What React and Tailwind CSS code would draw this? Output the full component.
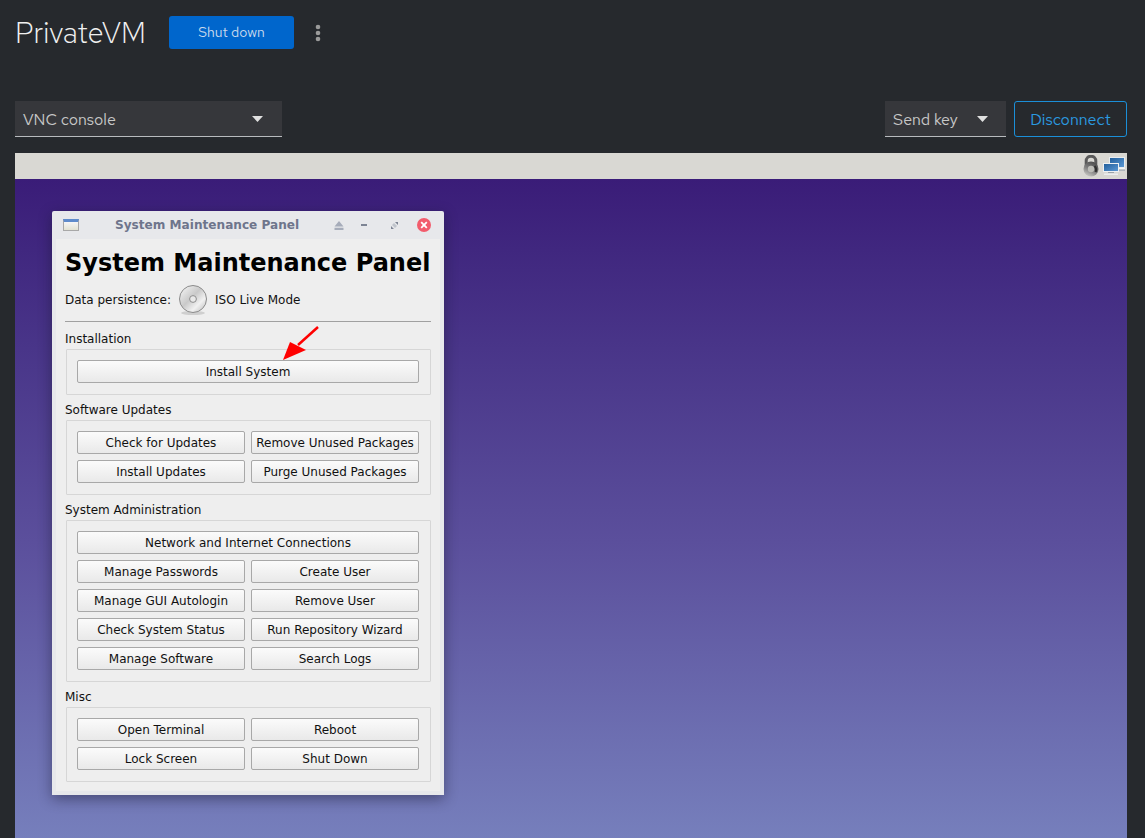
const ui = "font-['Red_Hat_Text','Open_Sans',sans-serif]";

function Caret() {
  return (
    <svg width="11" height="6" viewBox="0 0 11 6" className="shrink-0 mt-px">
      <path d="M0 0h11L5.5 6z" fill="#e0e0e0" />
    </svg>
  );
}

function Select({ label, className }) {
  return (
    <div className={`flex items-center justify-between bg-[#36373b] border-b border-[#b8bbbe] h-9 pl-2 ${className}`}>
      <span className="pt-[3px] text-[16px] leading-none text-[#c7c7c7]">{label}</span>
      <Caret />
    </div>
  );
}

function Btn({ children }) {
  return (
    <button className="h-[23px] rounded-[2px] border border-[#a8a8a8] bg-gradient-to-b from-[#fbfbfb] to-[#e9e9e9] text-[12px] leading-none text-[#111]">
      {children}
    </button>
  );
}

function Group({ title, rows }) {
  return (
    <div>
      <div className="h-[25px] pt-[6px] text-[12px] leading-[18px] text-[#111]">{title}</div>
      <div className="ml-px w-[365px] flex flex-col gap-[6px] border border-[#d6d6d6] rounded-[1px] pl-[10px] pr-[11px] pt-[10px] pb-[11px]">
        {rows.map((row, i) => (
          <div key={i} className="grid grid-cols-2 gap-[6px]">
            {row.map((b) => (
              <div key={b} className={row.length === 1 ? 'col-span-2 grid' : 'grid'}>
                <Btn>{b}</Btn>
              </div>
            ))}
          </div>
        ))}
      </div>
    </div>
  );
}

function DiscIcon() {
  return (
    <svg width="30" height="32" viewBox="0 0 30 32" className="shrink-0">
      <defs>
        <linearGradient id="disc" x1="0" y1="0" x2="1" y2="1">
          <stop offset="0" stopColor="#fafafa" />
          <stop offset="0.45" stopColor="#c9c9c9" />
          <stop offset="0.7" stopColor="#f1f1f1" />
          <stop offset="1" stopColor="#b5b5b5" />
        </linearGradient>
      </defs>
      <ellipse cx="15" cy="29" rx="12" ry="2" fill="#cfcfcf" />
      <circle cx="15" cy="15" r="13.5" fill="url(#disc)" stroke="#8b8b8b" />
      <circle cx="15" cy="15" r="3.4" fill="#e8e8e8" stroke="#8d8d8d" />
    </svg>
  );
}

function LockIcon() {
  return (
    <svg width="18" height="22" viewBox="0 0 18 22">
      <defs>
        <linearGradient id="lockBody" x1="0.7" y1="0" x2="0.2" y2="1">
          <stop offset="0" stopColor="#4a4a4a" />
          <stop offset="0.5" stopColor="#7d7d7d" />
          <stop offset="1" stopColor="#cfcfca" />
        </linearGradient>
      </defs>
      <path d="M4.2 11V6a4.8 4.8 0 0 1 9.6 0v5" fill="none" stroke="#5a5a5a" strokeWidth="3" />
      <circle cx="9" cy="14" r="7.5" fill="url(#lockBody)" />
      <circle cx="9" cy="14" r="3.2" fill="#bdbdb8" />
      <path d="M12.5 11a5 5 0 0 1 1 6" fill="none" stroke="#2f2f2f" strokeWidth="2.2" />
    </svg>
  );
}

function NetworkIcon() {
  return (
    <svg width="22" height="18" viewBox="0 0 22 18">
      <defs>
        <linearGradient id="screen" x1="0" y1="0" x2="1" y2="1">
          <stop offset="0" stopColor="#1f5c99" />
          <stop offset="1" stopColor="#5c9ad6" />
        </linearGradient>
      </defs>
      <rect x="6.5" y="0.5" width="15" height="10" fill="url(#screen)" stroke="#e8ecef" />
      <rect x="14" y="11" width="8" height="1" fill="#f2f4f5" />
      <rect x="14" y="12.5" width="8" height="1.5" fill="#aeb5bb" />
      <rect x="0.5" y="6.5" width="15" height="8" fill="url(#screen)" stroke="#eef1f3" />
      <rect x="5" y="15" width="6" height="1" fill="#9aa2a9" />
      <rect x="1" y="16.5" width="14" height="1.5" fill="#eceeef" />
    </svg>
  );
}

function WindowButtons() {
  return (
    <div className="flex items-center">
      <svg width="10" height="9" viewBox="0 0 10 9">
        <path d="M5 0l4.5 5.5h-9zM.5 6.8h9V9h-9z" fill="#a6acba" />
      </svg>
      <div className="ml-[17px] w-[6px] h-[2px] bg-[#7d8494]" />
      <svg width="7" height="7" viewBox="0 0 7 7" className="ml-[24px]">
        <path d="M4 0h3v3zM0 4l3 3H0z" fill="#7d8494" />
        <path d="M3 1l3 3-2 2-3-3z" fill="#c0c4cc" />
      </svg>
      <div className="ml-[19px] w-[14px] h-[14px] rounded-full bg-[#f25c6c] flex items-center justify-center">
        <svg width="8" height="8" viewBox="0 0 8 8">
          <path d="M1.2 1.2l5.6 5.6M6.8 1.2L1.2 6.8" stroke="#fff" strokeWidth="1.8" />
        </svg>
      </div>
    </div>
  );
}

export default function App() {
  return (
    <div className={`h-[838px] overflow-hidden bg-[#26292d] ${ui}`}>
      <div className="flex items-center h-[65px] pl-[15px]">
        <h1 className="text-[29.5px] font-light leading-none text-[#f0f0f0] w-[154px]">PrivateVM</h1>
        <button className="w-[125px] h-[33px] rounded-[3px] bg-[#0066cc] text-[14px] text-[#c9d9ec]">Shut down</button>
        <svg width="6" height="18" viewBox="0 0 6 18" className="ml-[21px] text-[#9a9a9a]">
          <circle cx="3" cy="3" r="2.3" fill="currentColor" />
          <circle cx="3" cy="9" r="2.3" fill="currentColor" />
          <circle cx="3" cy="15" r="2.3" fill="currentColor" />
        </svg>
      </div>

      <div className="flex items-center justify-between px-[15px] mr-[3px] mt-9 mb-4 h-9">
        <Select label="VNC console" className="w-[267px] pr-[19px]" />
        <div className="flex items-center gap-2">
          <Select label="Send key" className="w-[121px] pr-[18px]" />
          <button className="w-[113px] h-9 pt-px rounded-[3px] border border-[#1b8fd8] text-[16px] text-[#2b9ae0]">Disconnect</button>
        </div>
      </div>

      <div className="mx-[15px] mr-[18px] h-[685px] flex flex-col">
        <div className="flex justify-end items-center gap-[3px] h-[26px] bg-[#d9d8d3] pr-[2px]">
          <LockIcon />
          <NetworkIcon />
        </div>
        <div className="relative flex-1 bg-gradient-to-b from-[#3a1c78] via-[#5b4f9c] via-55% to-[#767fbc]">
          <div className="absolute left-[37px] top-[32px] w-[392px] h-[584px] bg-[#e7e8eb] rounded-t-[2px] shadow-[0_4px_14px_rgba(20,20,40,0.45)] font-['DejaVu_Sans',sans-serif]">
            <div className="flex items-center h-[28px] pl-[11px]">
              <div className="w-[16px] h-[12px] border border-[#a8a8a8] border-t-[3px] border-t-[#5f8bcb] bg-gradient-to-b from-[#f6f6f6] to-[#e2e2d2]" />
              <span className="ml-[36px] w-[219px] text-[12.1px] font-bold whitespace-nowrap text-[#6e758c]">System Maintenance Panel</span>
              <WindowButtons />
            </div>
            <div className="mx-[4px] h-[552px] bg-[#eeeeee] pl-[9px] pr-[9px]">
              <h2 className="pt-[9px] text-[24px] font-bold leading-[30px] whitespace-nowrap text-black">System Maintenance Panel</h2>
              <div className="flex items-center h-[34px] mt-[5px] text-[12px] text-[#111]">
                <span>Data persistence:</span>
                <span className="ml-[7px]"><DiscIcon /></span>
                <span className="ml-[7px]">ISO Live Mode</span>
              </div>
              <div className="mt-[4px] mb-[2px] border-t border-[#a0a0a0] h-0" />
              <Group title="Installation" rows={[['Install System']]} />
              <div className="relative">
                <svg width="40" height="38" viewBox="0 0 40 38" className="absolute left-[215px] top-[-70px]">
                  <path d="M38 2L18 20" stroke="#f00" strokeWidth="2.5" />
                  <path d="M3 35l7-18 16 8z" fill="#f00" />
                </svg>
              </div>
              <Group title="Software Updates" rows={[['Check for Updates', 'Remove Unused Packages'], ['Install Updates', 'Purge Unused Packages']]} />
              <Group
                title="System Administration"
                rows={[
                  ['Network and Internet Connections'],
                  ['Manage Passwords', 'Create User'],
                  ['Manage GUI Autologin', 'Remove User'],
                  ['Check System Status', 'Run Repository Wizard'],
                  ['Manage Software', 'Search Logs'],
                ]}
              />
              <Group title="Misc" rows={[['Open Terminal', 'Reboot'], ['Lock Screen', 'Shut Down']]} />
            </div>
          </div>
        </div>
      </div>
    </div>
  );
}
